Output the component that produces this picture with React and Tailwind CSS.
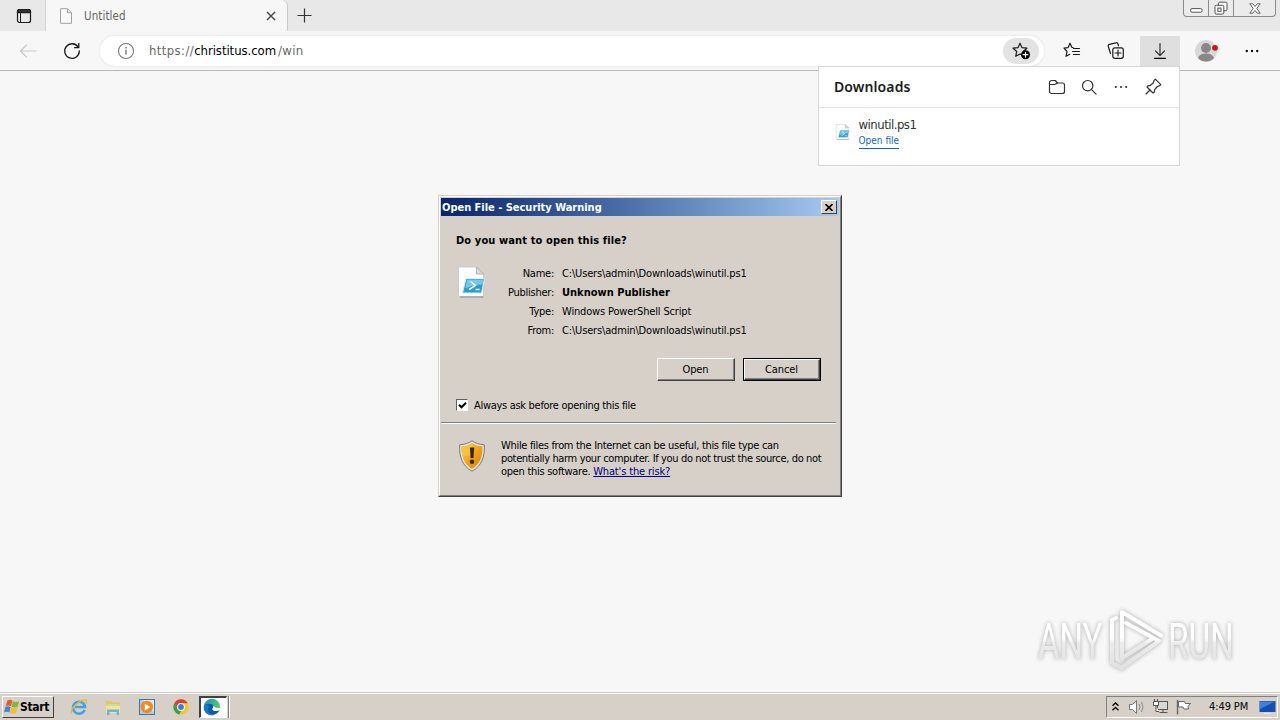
const iconProps = {
  fill: "none",
  stroke: "#1b1b1b",
  strokeWidth: 1.2,
  strokeLinecap: "round",
  strokeLinejoin: "round",
};

const STAR = "M8 1.2l2 4.5 4.9.5-3.6 3.3 1 4.8L8 11.9l-4.3 2.4 1-4.8L1.1 6.2 6 5.7z";

const TabStrip = () => (
  <div className="flex h-[31px] bg-[#e8e8e8]">
    <div className="flex w-[46px] items-center justify-center border-r border-[#d2d2d2] pt-px">
      <svg width="16" height="16" viewBox="0 0 16 16" {...iconProps} className="ml-0.5">
        <rect x="1.5" y="1.5" width="13" height="13" rx="2" />
        <path d="M1.5 3.4a2 2 0 0 1 2-1.9h9a2 2 0 0 1 2 1.9v1.3h-13z" fill="#333" />
        <path d="M4.5 5.5v9" strokeWidth="1" />
      </svg>
    </div>
    <div className="flex w-[242px] items-center rounded-tr-md border-r border-[#c9c9c9] bg-[#f7f7f7] pt-px">
      <svg width="14" height="16" viewBox="0 0 14 16" className="ml-[13px]" fill="#fafafa" stroke="#a0a0a0" strokeWidth="1">
        <path d="M1.5.7h7l4 4v10.6h-11z" />
        <path d="M8.5.7v4h4" />
      </svg>
      <span className="ml-[11px] flex-1 pt-px text-[11.5px] tracking-[0.1px] text-[#666]">Untitled</span>
      <svg width="10" height="10" viewBox="0 0 10 10" stroke="#444" strokeWidth="1.4" className="mr-[11px]">
        <path d="M1 1l8 8M9 1l-8 8" />
      </svg>
    </div>
    <svg width="15" height="15" viewBox="0 0 15 15" stroke="#333" strokeWidth="1.2" className="mt-[8px] ml-[9px]">
      <path d="M7.5.5v14M.5 7.5h14" />
    </svg>
    <div className="mr-[4px] ml-auto flex h-[17px] w-[93px] rounded-b border border-t-0 border-[#8b8b8b] bg-[#ebebeb]">
      <div className="flex w-[25px] items-center justify-center border-r border-[#8b8b8b]">
        <svg width="13" height="5" viewBox="0 0 13 5" className="mt-1">
          <rect x=".6" y=".6" width="11.5" height="3.6" rx="1.4" fill="#fff" stroke="#555" />
        </svg>
      </div>
      <div className="flex w-[25px] items-center justify-center border-r border-[#8b8b8b]">
        <svg width="14" height="14" viewBox="0 0 14 14" fill="#f7f7f7" stroke="#555">
          <rect x="4.5" y="1.2" width="8.5" height="8.5" rx="1.2" />
          <rect x="1" y="4.3" width="8.8" height="8.8" rx="1.2" />
          <rect x="3.8" y="7.1" width="3.2" height="3.2" />
        </svg>
      </div>
      <div className="flex flex-1 items-center justify-center">
        <svg width="12" height="11" viewBox="0 0 12 11" fill="#fafafa" stroke="#555" strokeWidth=".9">
          <path d="M.8.8h3L6 3.5 8.2.8h3L7.8 5.5l3.4 4.7h-3L6 7.5l-2.2 2.7h-3L4.2 5.5z" />
        </svg>
      </div>
    </div>
  </div>
);

const Toolbar = () => (
  <div className="flex h-[40px] items-center border-b border-[#b8b8b8] bg-[#f7f7f7]">
    <svg width="18" height="14" viewBox="0 0 18 14" {...iconProps} stroke="#c9c9c9" className="ml-[19px]">
      <path d="M17 7H1.5M7.5 1l-6 6 6 6" />
    </svg>
    <svg width="18" height="18" viewBox="0 0 18 18" {...iconProps} strokeWidth="1.3" className="ml-[26px]">
      <path d="M15.2 5.2A7.3 7.3 0 1 0 16.3 9" />
      <path d="M15.8 1.5v4.2h-4.2" />
    </svg>
    <div className="ml-[19px] flex h-[30px] w-[944px] items-center rounded-full bg-white pr-[5px] pl-[17px] shadow-[0_0_3px_#dedede]">
      <svg width="18" height="18" viewBox="0 0 18 18" fill="none" stroke="#777" strokeWidth="1.1">
        <circle cx="9" cy="9" r="7.5" />
        <path d="M9 7.8v4.8M9 5v1.4" strokeWidth="1.4" />
      </svg>
      <div className="ml-[14px] flex-1 pt-px text-[13px] whitespace-nowrap text-[#686868]">
        <span className="tracking-[0.4px]">https://</span>
        <span className="tracking-[-0.05px] text-black">christitus.com</span>
        <span className="ml-0.5 tracking-[0.3px]">/win</span>
      </div>
      <div className="flex h-[26px] w-[36px] items-center justify-center rounded-full bg-[#e3e3e3]">
        <svg width="19" height="18" viewBox="0 0 19 18" {...iconProps}>
          <path d={STAR} />
          <circle cx="13.5" cy="12.7" r="4.5" fill="#000" stroke="none" />
          <path d="M13.5 10.3v4.8M11.1 12.7h4.8" stroke="#fff" />
        </svg>
      </div>
    </div>
    <div className="ml-[6px] flex w-[44px] justify-center">
      <svg width="18" height="17" viewBox="0 0 18 17" {...iconProps}>
        <path d="M10.3 5.7L8.8 5.2 7 1.2 5 5.7l-4 .5 3 3.3-1 4.8 3.7-2" />
        <path d="M10.5 6.5h6M9.5 9.5h7M10.5 12.5h6" />
      </svg>
    </div>
    <div className="flex w-[44px] justify-center">
      <svg width="18" height="18" viewBox="0 0 18 18" {...iconProps}>
        <path d="M3.5 11.5L1.3 4.5a1.8 1.8 0 0 1 1.2-2.2l6.3-1.5a1.8 1.8 0 0 1 2.2 1.2l.5 1.8" />
        <rect x="5.8" y="5.8" width="10.5" height="10.5" rx="2" />
        <path d="M11 8v6M8 11h6" />
      </svg>
    </div>
    <div className="flex w-[44px] justify-center">
      <div className="flex h-[30px] w-[40px] items-center justify-center bg-[#dfdfdf]">
        <svg width="14" height="18" viewBox="0 0 14 18" {...iconProps} stroke="#333">
          <path d="M7 1.5v12M2.5 9l4.5 4.6L11.5 9" />
          <path d="M1.5 16.4h11" stroke="#000" />
        </svg>
      </div>
    </div>
    <div className="flex w-[48px] justify-center">
      <svg width="24" height="24" viewBox="0 0 24 24" className="mr-px">
        <circle cx="12" cy="12" r="11" fill="#d8d8d8" />
        <circle cx="12" cy="9" r="5" fill="#888" />
        <path d="M4.2 19.3c0-6.5 15.6-6.5 15.6 0A11 11 0 0 1 4.2 19.3z" fill="#888" />
        <circle cx="21" cy="8.8" r="2.9" fill="#d50f1f" />
      </svg>
    </div>
    <div className="flex w-[44px] justify-center">
      <svg width="14" height="4" viewBox="0 0 14 4" className="fill-[#111]">
        <circle cx="1.8" cy="2" r="1.2" />
        <circle cx="7" cy="2" r="1.2" />
        <circle cx="12.2" cy="2" r="1.2" />
      </svg>
    </div>
  </div>
);

const ScriptIcon = ({ size, className = "" }) => (
  <svg width={size} height={size} viewBox="0 0 32 32" className={className}>
    <path d="M2.5 1h18l7 7v22.5h-25z" fill="#fdfdfd" stroke="#c4c4c4" strokeWidth=".8" />
    <path d="M20.5 1v7h7z" fill="#d9dcdf" stroke="#a5a5a5" strokeWidth=".8" />
    <path d="M10 12.500h18.500L25.500 27H6.500z" fill="#2e9bcb" stroke="#d8eef8" />
    <path d="M11 13.500h16.500l-1 5q-9 0-17 4z" fill="#79c7e8" />
    <path d="M14.500 15.500l5 4-6.500 4M19.500 23.500h4" fill="none" stroke="#fff" strokeWidth="1.5" />
    <path d="M4 31h23.500" stroke="#8f8f8f" />
  </svg>
);

const DownloadsPanel = () => (
  <div className="absolute top-[66px] left-[818px] h-[100px] w-[362px] border border-[#d6d6d6] bg-white">
    <div className="flex h-[41px] items-center border-b border-[#e5e5e5] pr-[17px] pb-px pl-[15px]">
      <span className="flex-1 pb-px font-['Noto_Sans'] text-[14px] font-semibold tracking-[0.1px] text-[#1b1b1b]">
        Downloads
      </span>
      <svg width="18" height="16" viewBox="0 0 18 16" {...iconProps} stroke="#333">
        <path d="M1.5 3.5a2 2 0 0 1 2-2h3.8L9.5 4h5a2 2 0 0 1 2 2v6.5a2 2 0 0 1-2 2h-11a2 2 0 0 1-2-2z" />
        <path d="M1.5 5.5h5.3L9.5 4" />
      </svg>
      <svg width="16" height="16" viewBox="0 0 16 16" {...iconProps} stroke="#333" className="ml-[15px]">
        <circle cx="6.7" cy="6.7" r="5.2" />
        <path d="M10.6 10.6l4.5 4.5" />
      </svg>
      <svg width="14" height="4" viewBox="0 0 14 4" fill="#333" className="ml-[17px]">
        <circle cx="1.8" cy="2" r="1.1" />
        <circle cx="7" cy="2" r="1.1" />
        <circle cx="12.2" cy="2" r="1.1" />
      </svg>
      <svg width="17" height="17" viewBox="0 0 17 17" {...iconProps} stroke="#333" className="ml-[17px]">
        <path d="M10.3 1.2l5.5 5.5-1.5 1.2-2 .6-2.6 3.2-.5 2.6-1.2.7L2 9l.8-1.2 2.600-.5 3-2.600.6-2z" />
        <path d="M5 12l-4 4" />
      </svg>
    </div>
    <div className="flex pt-[9px] pl-[16px]">
      <ScriptIcon size={16} className="mt-[7px]" />
      <div className="ml-[7px] flex flex-col items-start pl-[0.5px]">
        <span className="text-[13px] leading-[15px] tracking-[-0.5px] text-[#333]">winutil.ps1</span>
        <span className="mt-[2px] h-[15px] border-b border-[#1668ab] text-[10px] leading-[13px] text-[#1668ab]">
          Open file
        </span>
      </div>
    </div>
  </div>
);

const details = [
  { label: "Name:", value: "C:\\Users\\admin\\Downloads\\winutil.ps1" },
  { label: "Publisher:", value: "Unknown Publisher", bold: true },
  { label: "Type:", value: "Windows PowerShell Script" },
  { label: "From:", value: "C:\\Users\\admin\\Downloads\\winutil.ps1" },
];

const DialogButton = ({ children }) => (
  <div className="h-full w-full border border-t-white border-r-[#404040] border-b-[#404040] border-l-white">
    <div className="flex h-full items-center justify-center border-r border-b border-[#808080] pt-[2px] tracking-[-0.1px]">
      {children}
    </div>
  </div>
);

const SecurityDialog = () => (
  <div className="absolute top-[195px] left-[438px] h-[302px] w-[404px] border border-t-[#d6d0c9] border-r-[#404040] border-b-[#404040] border-l-[#d6d0c9] text-[11px] text-black">
    <div className="flex h-full flex-col border border-t-white border-r-[#808080] border-b-[#808080] border-l-white bg-[#d6d0c9] p-px">
      <div className="flex h-[18px] shrink-0 items-center justify-between bg-linear-to-r from-[#0a246a] to-[#a6caf0] pr-[2px] pl-px">
        <span className="pt-[2px] text-[11px] font-bold tracking-[-0.02px] text-white">Open File - Security Warning</span>
        <div className="flex h-[14px] w-[16px] items-center justify-center border border-t-white border-r-[#404040] border-b-[#404040] border-l-white bg-[#d6d0c9]">
          <svg width="8" height="7" viewBox="0 0 8 7" stroke="#000" strokeWidth="1.6">
            <path d="M.5 0l7 7M7.5 0l-7 7" />
          </svg>
        </div>
      </div>
      <div className="pt-[17px] pl-[15px] font-bold">
        <p className="h-[14px] leading-[15px] tracking-[0.12px]">Do you want to open this file?</p>
      </div>
      <div className="mt-[16px] flex h-[78px] pl-[15px]">
        <ScriptIcon size={32} className="mt-[3px] shrink-0" />
        <div className="flex flex-col pt-[1.5px]">
          {details.map((item) => (
            <div key={item.label} className="flex h-[19.4px] items-center whitespace-nowrap">
              <span className="w-[66px] text-right tracking-[-0.25px]">{item.label}</span>
              <span className={item.bold ? "ml-[8px] font-bold" : "ml-[8px] tracking-[-0.16px]"}>{item.value}</span>
            </div>
          ))}
        </div>
      </div>
      <div className="mt-[17px] flex justify-end gap-[8px] pr-[18px]">
        <div className="h-[23px] w-[78px]">
          <DialogButton>Open</DialogButton>
        </div>
        <div className="h-[23px] w-[78px] border border-black">
          <DialogButton>Cancel</DialogButton>
        </div>
      </div>
      <div className="mt-[16px] flex items-center pl-[15px]">
        <div className="flex h-[12px] w-[12px] items-center justify-center border border-t-[#606060] border-r-white border-b-white border-l-[#606060] bg-white">
          <svg width="9" height="9" viewBox="0 0 9 9" fill="none" stroke="#000" strokeWidth="2">
            <path d="M1 3.8l2.5 2.5L8 1.8" />
          </svg>
        </div>
        <span className="ml-[6px] pt-px leading-[15px] tracking-[-0.3px]">Always ask before opening this file</span>
      </div>
      <div className="mt-[9px] mr-[3px] h-[2px] shrink-0 border-t border-b border-t-[#808080] border-b-white" />
      <div className="flex pt-[15px] pl-[17px]">
        <svg width="28" height="32" viewBox="0 0 28 32" className="mt-[1px] shrink-0">
          <defs>
            <linearGradient id="shield" x1="0" y1="0" x2="1" y2="1">
              <stop offset="0" stopColor="#ffd45c" />
              <stop offset=".5" stopColor="#f3a31b" />
              <stop offset="1" stopColor="#d97a08" />
            </linearGradient>
          </defs>
          <path
            d="M14 .8c3.5 2.4 7.5 3.7 12.3 4 .8 12-3 21.5-12.3 26.4C4.7 26.3.9 16.8 1.7 4.8 6.5 4.5 10.5 3.2 14 .8z"
            fill="#e6e6e2"
            stroke="#777"
          />
          <path d="M14 3c3.2 2 6.5 3.2 10.5 3.5.3 10.5-2.9 18-10.5 22.4C6.4 24.5 3.2 17 3.5 6.5 7.5 6.2 10.8 5 14 3z" fill="url(#shield)" />
          <path d="M14 3C10.8 5 7.5 6.2 3.5 6.5c-.1 3.5.2 6.5.9 9.5 3 .3 6.5 0 9.6-1z" fill="#fbc040" />
          <path d="M11.9 7.5h4.3l-.7 10.5h-2.9z" fill="#2b2b25" />
          <circle cx="14" cy="21.7" r="2.2" fill="#2b2b25" />
        </svg>
        <p className="ml-[15px] text-[11px] leading-[13px] tracking-[-0.31px] whitespace-nowrap">
          While files from the Internet can be useful, this file type can
          <br />
          <span className="tracking-[-0.36px]">potentially harm your computer. If you do not trust the source, do not</span>
          <br />
          <span className="tracking-[-0.28px]">open this software. </span>
          <span className="tracking-[-0.15px] text-[#00007b] underline">What&apos;s the risk?</span>
        </p>
      </div>
    </div>
  </div>
);

const FadeStops = () => (
  <>
    <stop offset=".4" stopColor="#fff" />
    <stop offset=".5" stopColor="#ececec" />
    <stop offset="1" stopColor="#e2e2e2" />
  </>
);

const Watermark = () => (
  <svg
    width="250"
    height="90"
    viewBox="0 0 250 90"
    className="absolute top-[600px] left-[1025px] overflow-visible drop-shadow-[0_0_2px_#aaa]"
    fontFamily="Roboto, sans-serif"
    fontSize="50"
  >
    <defs>
      <linearGradient id="fade" gradientUnits="userSpaceOnUse" x1="0" y1="20" x2="0" y2="66">
        <FadeStops />
      </linearGradient>
      {/* the words are drawn from their baseline, so their fade is too */}
      <linearGradient id="fadeText" gradientUnits="userSpaceOnUse" x1="0" y1="-39" x2="0" y2="7">
        <FadeStops />
      </linearGradient>
    </defs>
    <g fill="url(#fadeText)">
      <text transform="translate(13 59) scale(.66 1)">ANY</text>
      <text transform="translate(143 59) scale(.665 1)">RUN</text>
    </g>
    <g fill="none" stroke="url(#fade)" strokeWidth="4" strokeLinejoin="round" strokeLinecap="round">
      <path d="M97 59V12l39 23.5" />
      <path d="M101 23l33 18-38 27" />
      <path d="M91 18l-4 2v43l10 5" />
      <path d="M97 58l30-19" />
    </g>
  </svg>
);

const Taskbar = () => (
  <div className="flex h-[28px] items-center border-t border-[#d6d0c9] bg-[#d6d0c9] text-black">
    <div className="flex h-full w-full items-center border-t border-white pb-px">
      <div className="ml-[2px] flex h-[22px] w-[52px] items-center border border-t-white border-r-[#404040] border-b-[#404040] border-l-white pl-px">
        <svg width="16" height="16" viewBox="0 0 16 16" className="shrink-0">
          <path d="M3.5 1.500q2.500-1.500 5 0L7 7.200q-2.500-1.500-5.500 0z" fill="#e8582a" />
          <path d="M9 2.200q2.500 1.500 6.200 0L13.700 7.700q-3 1.500-6.200 0z" fill="#7db73c" />
          <path d="M1.300 8q2.700-1.500 5.400 0l-1.400 5.500q-2.500-1.500-5.200 0z" fill="#3f87cf" />
          <path d="M7.300 8.500q3 1.500 6.200 0l-1.500 5.500q-3 1.500-6 0z" fill="#f5bd2b" />
        </svg>
        <span className="text-[12px] font-bold tracking-[-0.35px]">Start</span>
      </div>
      <svg width="18" height="18" viewBox="0 0 18 18" className="ml-[16px]">
        <path d="M14.6 12a6 6 0 1 1 .4-3H5" fill="none" stroke="#45a4dd" strokeWidth="2.6" />
        <path d="M1.5 15.5C-.5 12 10 1 15.5 2c1.500.4 1 2.500.3 3.800" fill="none" stroke="#eab73e" strokeWidth="1.4" />
      </svg>
      <svg width="18" height="18" viewBox="0 0 18 18" className="ml-[16px]">
        <path d="M2 3h5l1 1.500h8V15H2z" fill="#e9c35d" />
        <path d="M3 6h12v4H3z" fill="#bfe0a4" />
        <path d="M2 8h14v7H2z" fill="#f6e49c" />
        <path d="M3 17v-5.500h12V17h-2.500v-3H5.500v3z" fill="#6cb4da" />
      </svg>
      <svg width="18" height="18" viewBox="0 0 18 18" className="ml-[16px]">
        <rect x="1.5" y="1.5" width="15" height="15" fill="#a9cdf0" stroke="#3e74b4" />
        <path d="M5 2h11v12z" fill="#d9eafa" />
        <circle cx="8.8" cy="9" r="6.2" fill="#f08a1d" />
        <path d="M6.8 5.500v7l5.500-3.500z" fill="#fff" />
      </svg>
      <svg width="18" height="18" viewBox="0 0 18 18" className="ml-[16px]">
        <circle cx="9" cy="9" r="7.700" fill="#f2c82e" />
        <path d="M2.3 5.200A7.700 7.700 0 0 1 15.700 5.200H9L5.800 11z" fill="#dd4032" />
        <path d="M2.3 5.200L6 11l3 2-1.700 3.500A7.700 7.700 0 0 1 2.300 5.200z" fill="#3a9f4c" />
        <circle cx="9" cy="9" r="3.900" fill="#fff" />
        <circle cx="9" cy="9" r="2.900" fill="#3d7be0" />
      </svg>
      <div className="ml-[9px] flex h-[22px] w-[28px] items-center justify-center border-t-2 border-r border-b border-l-2 border-t-[#404040] border-r-white border-b-white border-l-[#404040] bg-white">
        <svg width="18" height="18" viewBox="0 0 18 18" className="mr-[3px] shrink-0">
          <defs>
            <linearGradient id="edge" x1="0" y1="0" x2="1" y2=".3">
              <stop offset="0" stopColor="#1687d0" />
              <stop offset="1" stopColor="#5ccb70" />
            </linearGradient>
          </defs>
          <circle cx="9" cy="9" r="8.200" fill="url(#edge)" />
          <path d="M.8 9C1.500 5 9 4.500 10.500 8c.6 2-1 2.500-.5 3.700.8 1.600 4 1.700 6.300.8-3 6-15 6.500-15.500-3.500z" fill="#0f58a8" />
          <path d="M6 8.500c-3 4 .5 8 5 8.400C4 18.500.5 13 .9 8.500 2 6 5 6.500 6 8.500z" fill="#1779ca" />
          <path d="M9.500 7.200c1.800 1.500-.3 3-.1 4.200.6 1.800 4 1.900 6.700.9 1.200-1 1.700-2 1.800-3-2 1.700-5.800.9-8.400-2.100z" fill="#fff" />
        </svg>
      </div>
      <div className="ml-[1px] h-[22px] w-[2px] border-r border-l border-r-white border-l-[#808080]" />
      <div className="mr-[2px] ml-auto flex h-[22px] w-[172px] items-center border border-t-[#808080] border-r-white border-b-white border-l-[#808080]">
        <svg width="7" height="9" viewBox="0 0 7 9" fill="none" stroke="#000" strokeWidth="1.3" className="mb-px ml-[5px]">
          <path d="M.5 3.800L3.500 1l3 2.800M.5 8.200l3-2.800 3 2.800" />
        </svg>
        <svg width="18" height="16" viewBox="0 0 18 16" fill="none" stroke="#777" className="ml-[9px]">
          <path d="M1.500 5.500h3l4-4v13l-4-4h-3z" fill="#fff" />
          <path d="M11 5q2 3 0 6M13.500 3q3 5 0 10" stroke="#888" />
        </svg>
        <svg width="17" height="17" viewBox="0 0 17 17" fill="#d8d8d8" stroke="#555" className="ml-[6px]">
          <rect x="5.5" y="3.5" width="10" height="8" />
          <path d="M7.500 14.500h8M11 11.500v3" />
          <path d="M1.500 3.500h5v4h-5zM2.500 1v2.500M5.500 1v2.500M4 7.500v6h3" fill="#fff" />
        </svg>
        <svg width="18" height="16" viewBox="0 0 18 16" fill="#fff" stroke="#666" className="ml-[6px]">
          <path d="M2.500 1v14.500" strokeWidth="1.4" />
          <path d="M3.500 2.500h6l1 2h5l-2.500 3 .5 2.500H9l-1-2H3.500z" />
        </svg>
        <span className="ml-[16px] w-[41px] pt-[2px] text-[11px] tracking-[-0.1px] whitespace-nowrap">4:49 PM</span>
        <svg width="17" height="16" viewBox="0 0 17 16" className="ml-[9px]">
          <rect x=".5" y="2" width="16" height="11" fill="#164eb0" />
          <path d="M1 2.500h15L1 10z" fill="#3f80d8" />
          <path d="M5 14.500h7" stroke="#e8e8e8" />
        </svg>
      </div>
    </div>
  </div>
);

export default function App() {
  return (
    <div className="relative flex h-[720px] w-[1280px] flex-col overflow-hidden bg-[#f7f7f7] font-['DejaVu_Sans_Condensed','DejaVu_Sans',sans-serif]">
      <TabStrip />
      <Toolbar />
      <main className="flex-1" />
      <Taskbar />
      <DownloadsPanel />
      <Watermark />
      <SecurityDialog />
    </div>
  );
}
